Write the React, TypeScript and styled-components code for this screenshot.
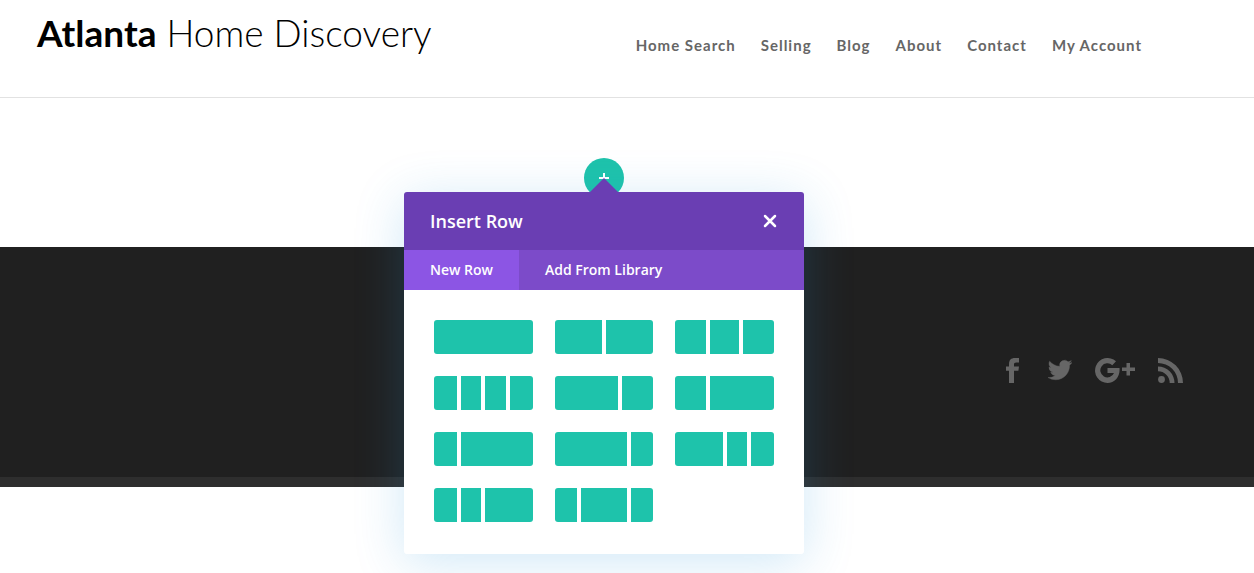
import React from "react";
import styled, { createGlobalStyle } from "styled-components";

const GlobalStyle = createGlobalStyle`
  *, *::before, *::after { box-sizing: border-box; }
  body { margin: 0; background: #fff; font-family: "Open Sans", "Liberation Sans", sans-serif; }
  button { border: 0; padding: 0; margin: 0; background: none; font: inherit; color: inherit; cursor: pointer; }
`;

const Page = styled.div`
  min-height: 100vh;
  overflow-x: hidden;
`;

const Header = styled.header`
  display: flex;
  justify-content: space-between;
  align-items: flex-start;
  padding: 8px 112px 0 37px;
  min-height: 98px;
  border-bottom: 1px solid #e2e2e2;
`;

const Logo = styled.a`
  font-family: Lato, "Liberation Sans", sans-serif;
  font-size: 37px;
  line-height: 50px;
  font-weight: 300;
  color: #000;
  text-decoration: none;
  white-space: nowrap;

  strong { font-weight: 700; }
`;

const Nav = styled.nav`
  display: flex;
  gap: 25px;
  padding-top: 27px;
`;

const NavLink = styled.a`
  font-family: Lato, "Liberation Sans", sans-serif;
  font-size: 15px;
  line-height: 20px;
  font-weight: 700;
  letter-spacing: 1px;
  color: #666;
  text-decoration: none;
  white-space: nowrap;
`;

const Builder = styled.main`
  display: flex;
  justify-content: center;
  padding: 60px 46px 49px 0;
`;

const AddRow = styled.div`
  position: relative;
  width: 40px;
  height: 40px;
`;

const AddButton = styled.button`
  display: grid;
  place-items: center;
  width: 40px;
  height: 40px;
  border-radius: 50%;
  background: #1ec3ab;
`;

const Modal = styled.section`
  position: absolute;
  top: 34px;
  left: 50%;
  width: 400px;
  margin-left: -200px;
  border-radius: 3px;
  background: #fff;
  box-shadow: 0 8px 50px rgba(43, 150, 218, 0.22);

  &::before {
    content: "";
    position: absolute;
    bottom: 100%;
    left: 50%;
    margin-left: -14px;
    border: 14px solid transparent;
    border-top-width: 0;
    border-bottom-color: #6a3eb3;
  }
`;

const ModalHeader = styled.header`
  display: flex;
  align-items: center;
  justify-content: space-between;
  height: 58px;
  padding: 0 26px;
  border-radius: 3px 3px 0 0;
  background: #6a3eb3;
  color: #fff;
`;

const ModalTitle = styled.h2`
  margin: 0;
  font-size: 18px;
  line-height: 24px;
  font-weight: 600;
`;

const CloseButton = styled.button`
  display: grid;
  place-items: center;
  width: 16px;
  height: 16px;
`;

const Tabs = styled.div`
  display: flex;
  background: #7c4bc9;
`;

const Tab = styled.button<{ $active?: boolean }>`
  padding: 10px 26px;
  font-size: 14px;
  line-height: 20px;
  font-weight: 600;
  color: #fff;
  background: ${(p) => (p.$active ? "#8c55e4" : "transparent")};
`;

const LayoutGrid = styled.div`
  display: grid;
  grid-template-columns: repeat(3, 1fr);
  gap: 22px;
  padding: 30px 30px 32px;
`;

const LayoutOption = styled.button<{ $tracks: number[] }>`
  display: grid;
  grid-template-columns: ${(p) => p.$tracks.map((t) => `${t}fr`).join(" ")};
  height: 34px;
  border-radius: 3px;
  overflow: hidden;
`;

const Column = styled.span`
  height: 34px;
  background: #1ec3ab;

  &:not(:first-child) { margin-left: 2px; }
  &:not(:last-child) { margin-right: 2px; }
`;

const Footer = styled.footer`
  background: #202020;
`;

const FooterContent = styled.div`
  display: flex;
  justify-content: flex-end;
  align-items: center;
  min-height: 230px;
  padding: 17px 71px 0 0;
`;

const SocialList = styled.ul`
  display: flex;
  align-items: center;
  gap: 23px;
  margin: 0;
  padding: 0;
  list-style: none;
`;

const SocialLink = styled.a`
  display: block;
  color: #666;

  svg { display: block; }
`;

const FooterBar = styled.div`
  height: 10px;
  background: #2e2e2e;
`;

const navItems = ["Home Search", "Selling", "Blog", "About", "Contact", "My Account"];

const rowLayouts: number[][] = [
  [1], [1, 1], [1, 1, 1],
  [1, 1, 1, 1], [2, 1], [1, 2],
  [1, 3], [3, 1], [2, 1, 1],
  [1, 1, 2], [1, 2, 1],
];

const socials = [
  {
    name: "Facebook",
    width: 19,
    art: <path d="M3 25V12.800H0V8.500H3V6C3 2 5 0 9 0H13V4.500H10.200C8.600 4.500 8 5.200 8 6.500V8.500H13L12.400 12.800H8V25Z" />,
  },
  {
    name: "Twitter",
    width: 24,
    art: (
      <path
        d="M23.950 4.570a10 10 0 0 1-2.820.780 4.960 4.960 0 0 0 2.160-2.730c-.950.560-2 .960-3.130 1.180a4.920 4.920 0 0 0-8.380 4.480C7.690 8.090 4.070 6.130 1.640 3.160a4.820 4.820 0 0 0-.670 2.480c0 1.710.870 3.210 2.190 4.100a4.900 4.900 0 0 1-2.230-.620v.060a4.920 4.920 0 0 0 3.950 4.830 5 5 0 0 1-2.210.080 4.940 4.940 0 0 0 4.600 3.420A9.870 9.870 0 0 1 0 19.540a13.990 13.990 0 0 0 7.550 2.210c9.050 0 14-7.500 14-13.980 0-.210 0-.420-.020-.630a9.940 9.940 0 0 0 2.460-2.550z"
        stroke="currentColor"
        strokeWidth="0.400"
      />
    ),
  },
  {
    name: "Google Plus",
    width: 40,
    art: (
      <>
        <path d="M12.500 10H24.500C25.400 18.500 20 25 12.500 25A12.500 12.500 0 1 1 21 3.300L17.300 7.200A7.100 7.100 0 1 0 19 15H12.500Z" />
        <path d="M31.500 5h3.500v4.500h5v3.500h-5v4.500h-3.500v-4.500h-4.500V9.500h4.500Z" />
      </>
    ),
  },
  {
    name: "RSS",
    width: 25,
    art: (
      <>
        <circle cx="3.500" cy="21.500" r="3.400" />
        <path d="M0 8.500A16.500 16.500 0 0 1 16.500 25H11.700A11.700 11.700 0 0 0 0 13.300Z" />
        <path d="M0 0A25 25 0 0 1 25 25H20A20 20 0 0 0 0 5Z" />
      </>
    ),
  },
];

export default function App() {
  return (
    <Page>
      <GlobalStyle />
      <Header>
        <Logo href="#">
          <strong>Atlanta</strong> Home Discovery
        </Logo>
        <Nav aria-label="Main">
          {navItems.map((item) => (
            <NavLink key={item} href="#">{item}</NavLink>
          ))}
        </Nav>
      </Header>
      <Builder>
        <AddRow>
          <AddButton aria-label="Add row">
            <svg width="10" height="10" fill="#fff" aria-hidden="true">
              <path d="M4 0h2v4h4v2H6v4H4V6H0V4h4Z" />
            </svg>
          </AddButton>
          <Modal role="dialog" aria-labelledby="insert-row-title">
            <ModalHeader>
              <ModalTitle id="insert-row-title">Insert Row</ModalTitle>
              <CloseButton aria-label="Close">
                <svg width="14" height="14" fill="none" stroke="#fff" strokeWidth="2.500" strokeLinecap="round" aria-hidden="true">
                  <path d="M2 2L12 12M12 2L2 12" />
                </svg>
              </CloseButton>
            </ModalHeader>
            <Tabs role="tablist">
              <Tab role="tab" aria-selected="true" $active>New Row</Tab>
              <Tab role="tab" aria-selected="false">Add From Library</Tab>
            </Tabs>
            <LayoutGrid>
              {rowLayouts.map((tracks) => (
                <LayoutOption key={tracks.join("-")} $tracks={tracks} aria-label={`Columns ${tracks.join(" : ")}`}>
                  {tracks.map((_, i) => <Column key={i} />)}
                </LayoutOption>
              ))}
            </LayoutGrid>
          </Modal>
        </AddRow>
      </Builder>
      <Footer>
        <FooterContent>
          <SocialList>
            {socials.map((s) => (
              <li key={s.name}>
                <SocialLink href="#" aria-label={s.name}>
                  <svg width={s.width} height="25" fill="currentColor" aria-hidden="true">{s.art}</svg>
                </SocialLink>
              </li>
            ))}
          </SocialList>
        </FooterContent>
        <FooterBar />
      </Footer>
    </Page>
  );
}
